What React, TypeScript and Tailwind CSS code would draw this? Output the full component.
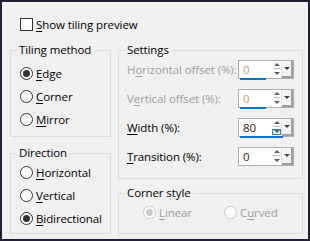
import { ReactNode } from "react";

const FONT = "font-['Segoe_UI','Open_Sans','Noto_Sans',sans-serif]";

function Key({ children }: { children: ReactNode }) {
  return <span className="underline underline-offset-2 decoration-1">{children}</span>;
}

function Radio({ label, checked, disabled }: { label: ReactNode; checked?: boolean; disabled?: boolean }) {
  return (
    <div className={`flex h-[23px] items-center gap-[3px] whitespace-nowrap ${disabled ? "text-[#a0a0a0]" : "text-black"}`}>
      <span
        className={`flex h-[13px] w-[13px] shrink-0 items-center justify-center rounded-full border bg-white ${
          disabled ? "border-[#cccccc]" : "border-[#333333]"
        }`}
      >
        {checked && <span className={`h-[7px] w-[7px] rounded-full ${disabled ? "bg-[#cccccc]" : "bg-[#333333]"}`} />}
      </span>
      <span className="leading-[16px]">{label}</span>
    </div>
  );
}

function Group({ title, className, children }: { title: string; className: string; children: ReactNode }) {
  return (
    <fieldset className={`border border-[#dcdcdc] pl-[6px] ${className}`}>
      <legend className="px-[2px] leading-[16px] text-black">{title}</legend>
      {children}
    </fieldset>
  );
}

function Spin({ value, disabled, bar, hover }: { value: string; disabled?: boolean; bar?: number; hover?: boolean }) {
  return (
    <div className="relative flex h-[19px] w-[56px] shrink-0 border border-[#adadad] bg-white">
      <div className={`flex-1 pl-[4px] leading-[17px] ${disabled ? "text-[#c9a36a]" : "text-[#3a2408]"}`}>{value}</div>
      <div className="flex w-[10px] flex-col items-center justify-center gap-[2px] border-r border-[#e3e3e3]">
        <span className="h-0 w-0 border-x-[3px] border-b-[3px] border-x-transparent border-b-[#606060]" />
        <span className="h-px w-[7px] bg-[#c0c0c0]" />
        <span
          className={`flex h-[6px] w-[9px] items-center justify-center ${hover ? "border border-[#3c7fb1] bg-[#dcecfc]" : ""}`}
        >
          <span className="h-0 w-0 border-x-[3px] border-t-[3px] border-x-transparent border-t-[#606060]" />
        </span>
      </div>
      <div className="flex w-[11px] items-center justify-center border-b-2 border-r-2 border-[#a0a0a0] bg-[#f4f4f4]">
        <span className="h-0 w-0 border-x-[3px] border-t-[3px] border-x-transparent border-t-[#404040]" />
      </div>
      {bar !== undefined && <div className="absolute bottom-[-2px] left-[1px] h-[2px] bg-[#0a74d0]" style={{ width: bar }} />}
    </div>
  );
}

function Row({ label, disabled, children }: { label: ReactNode; disabled?: boolean; children: ReactNode }) {
  return (
    <div className="flex h-[19px] items-center justify-between pl-[2px] pr-[8px]">
      <span className={`whitespace-nowrap leading-[16px] ${disabled ? "text-[#a0a0a0]" : "text-black"}`}>{label}</span>
      {children}
    </div>
  );
}

export default function App() {
  return (
    <div className={`h-[241px] w-[310px] border-2 border-[#221e36] bg-[#f0f0f0] text-[11.5px] tracking-[-0.1px] ${FONT}`}>
      <div className="ml-[18px] mt-[16px] flex h-[13px] items-center gap-[3px]">
        <span className="h-[13px] w-[13px] border border-[#333333] bg-white" />
        <span className="leading-[16px]">
          <Key>S</Key>how tiling preview
        </span>
      </div>

      <div className="ml-[8px] mt-[11px] flex gap-[7px]">
        <div className="flex w-[101px] flex-col">
          <Group title="Tiling method" className="h-[95px]">
            <div className="pl-[3px] pt-[4px]">
              <Radio label={<><Key>E</Key>dge</>} checked />
              <Radio label={<><Key>C</Key>orner</>} />
              <Radio label={<><Key>M</Key>irror</>} />
            </div>
          </Group>
          <Group title="Direction" className="mt-[8px] h-[89px]">
            <div className="pl-[3px]">
              <Radio label={<><Key>H</Key>orizontal</>} />
              <Radio label={<><Key>V</Key>ertical</>} />
              <Radio label={<><Key>B</Key>idirectional</>} checked />
            </div>
          </Group>
        </div>

        <div className="flex w-[185px] flex-col">
          <Group title="Settings" className="h-[137px]">
            <div className="mt-[2px] flex flex-col gap-[10px]">
              <Row label={<>H<Key>o</Key>rizontal offset (%):</>} disabled>
                <Spin value="0" disabled bar={26} />
              </Row>
              <Row label={<>V<Key>e</Key>rtical offset (%):</>} disabled>
                <Spin value="0" disabled bar={26} />
              </Row>
              <Row label={<><Key>W</Key>idth (%):</>}>
                <Spin value="80" bar={43} hover />
              </Row>
              <Row label={<><Key>T</Key>ransition (%):</>}>
                <Spin value="0" />
              </Row>
            </div>
          </Group>
          <Group title="Corner style" className="mt-[6px] h-[49px]">
            <div className="flex pl-[18px]">
              <div className="w-[81px]">
                <Radio label={<><Key>L</Key>inear</>} checked disabled />
              </div>
              <Radio label={<>C<Key>u</Key>rved</>} disabled />
            </div>
          </Group>
        </div>
      </div>
    </div>
  );
}
